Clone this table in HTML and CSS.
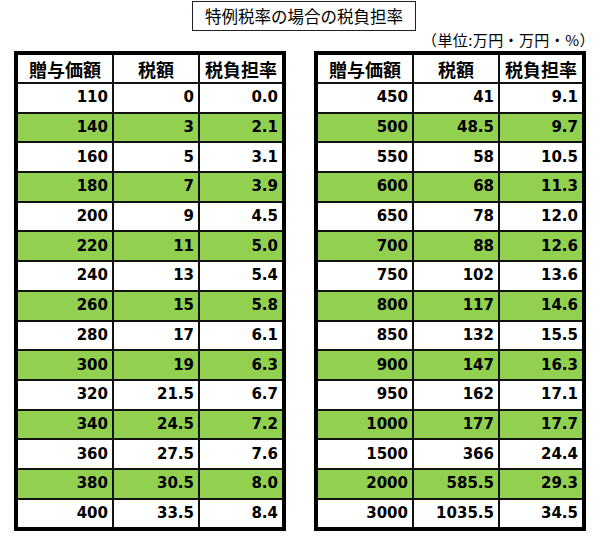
FILE: index.html
```html
<!DOCTYPE html>
<html lang="ja">
<head>
<meta charset="utf-8">
<link rel="stylesheet" href="styles.css">
</head>
<body>
<div class="page">
  <div class="title">特例税率の場合の税負担率</div>
  <div class="unit">（単位:万円・万円・%）</div>
  <div class="tables">
    <table class="rate">
      <thead><tr><th>贈与価額</th><th>税額</th><th>税負担率</th></tr></thead>
      <tbody>
        <tr><td>110</td><td>0</td><td>0.0</td></tr>
        <tr class="g"><td>140</td><td>3</td><td>2.1</td></tr>
        <tr><td>160</td><td>5</td><td>3.1</td></tr>
        <tr class="g"><td>180</td><td>7</td><td>3.9</td></tr>
        <tr><td>200</td><td>9</td><td>4.5</td></tr>
        <tr class="g"><td>220</td><td>11</td><td>5.0</td></tr>
        <tr><td>240</td><td>13</td><td>5.4</td></tr>
        <tr class="g"><td>260</td><td>15</td><td>5.8</td></tr>
        <tr><td>280</td><td>17</td><td>6.1</td></tr>
        <tr class="g"><td>300</td><td>19</td><td>6.3</td></tr>
        <tr><td>320</td><td>21.5</td><td>6.7</td></tr>
        <tr class="g"><td>340</td><td>24.5</td><td>7.2</td></tr>
        <tr><td>360</td><td>27.5</td><td>7.6</td></tr>
        <tr class="g"><td>380</td><td>30.5</td><td>8.0</td></tr>
        <tr><td>400</td><td>33.5</td><td>8.4</td></tr>
      </tbody>
    </table>
    <table class="rate">
      <thead><tr><th>贈与価額</th><th>税額</th><th>税負担率</th></tr></thead>
      <tbody>
        <tr><td>450</td><td>41</td><td>9.1</td></tr>
        <tr class="g"><td>500</td><td>48.5</td><td>9.7</td></tr>
        <tr><td>550</td><td>58</td><td>10.5</td></tr>
        <tr class="g"><td>600</td><td>68</td><td>11.3</td></tr>
        <tr><td>650</td><td>78</td><td>12.0</td></tr>
        <tr class="g"><td>700</td><td>88</td><td>12.6</td></tr>
        <tr><td>750</td><td>102</td><td>13.6</td></tr>
        <tr class="g"><td>800</td><td>117</td><td>14.6</td></tr>
        <tr><td>850</td><td>132</td><td>15.5</td></tr>
        <tr class="g"><td>900</td><td>147</td><td>16.3</td></tr>
        <tr><td>950</td><td>162</td><td>17.1</td></tr>
        <tr class="g"><td>1000</td><td>177</td><td>17.7</td></tr>
        <tr><td>1500</td><td>366</td><td>24.4</td></tr>
        <tr class="g"><td>2000</td><td>585.5</td><td>29.3</td></tr>
        <tr><td>3000</td><td>1035.5</td><td>34.5</td></tr>
      </tbody>
    </table>
  </div>
</div>
</body>
</html>
```
FILE: styles.css
```css
html, body {
  margin: 0;
  padding: 0;
  background: #fff;
}
.page {
  width: 600px;
  height: 545px;
  padding-top: 1px;
  box-sizing: border-box;
  font-family: "Noto Sans CJK JP", sans-serif;
  color: #000;
}
.title {
  margin-left: 192px;
  width: 224px;
  height: 30px;
  box-sizing: border-box;
  border: 1px solid #222;
  display: flex;
  align-items: center;
  justify-content: center;
  font-size: 16.5px;
  line-height: 1;
  padding-top: 1px;
}
.unit {
  margin-left: 422px;
  height: 20px;
  font-size: 15px;
  line-height: 18px;
  letter-spacing: 0.4px;
  white-space: nowrap;
}
.tables {
  display: flex;
  gap: 28px;
  margin-left: 14px;
}
.rate {
  width: 272px;
  border-collapse: collapse;
  border: 4px solid #000;
  table-layout: fixed;
}
.rate th, .rate td {
  border: 2px solid #111;
  padding: 0 4px 0 0;
}
.rate th {
  height: 27px;
  font-family: "Noto Sans CJK JP", sans-serif;
  font-weight: 700;
  font-size: 18px;
  text-align: center;
  padding: 0;
  line-height: 1;
}
.rate th:nth-child(1) { width: 94px; }
.rate th:nth-child(2) { width: 84px; }
.rate td {
  height: 27.7px;
  font-family: "DejaVu Sans", sans-serif;
  font-weight: 700;
  font-size: 15px;
  text-align: right;
  line-height: 1;
  color: #000;
}
.rate tr.g td {
  background: #92d050;
}
```
